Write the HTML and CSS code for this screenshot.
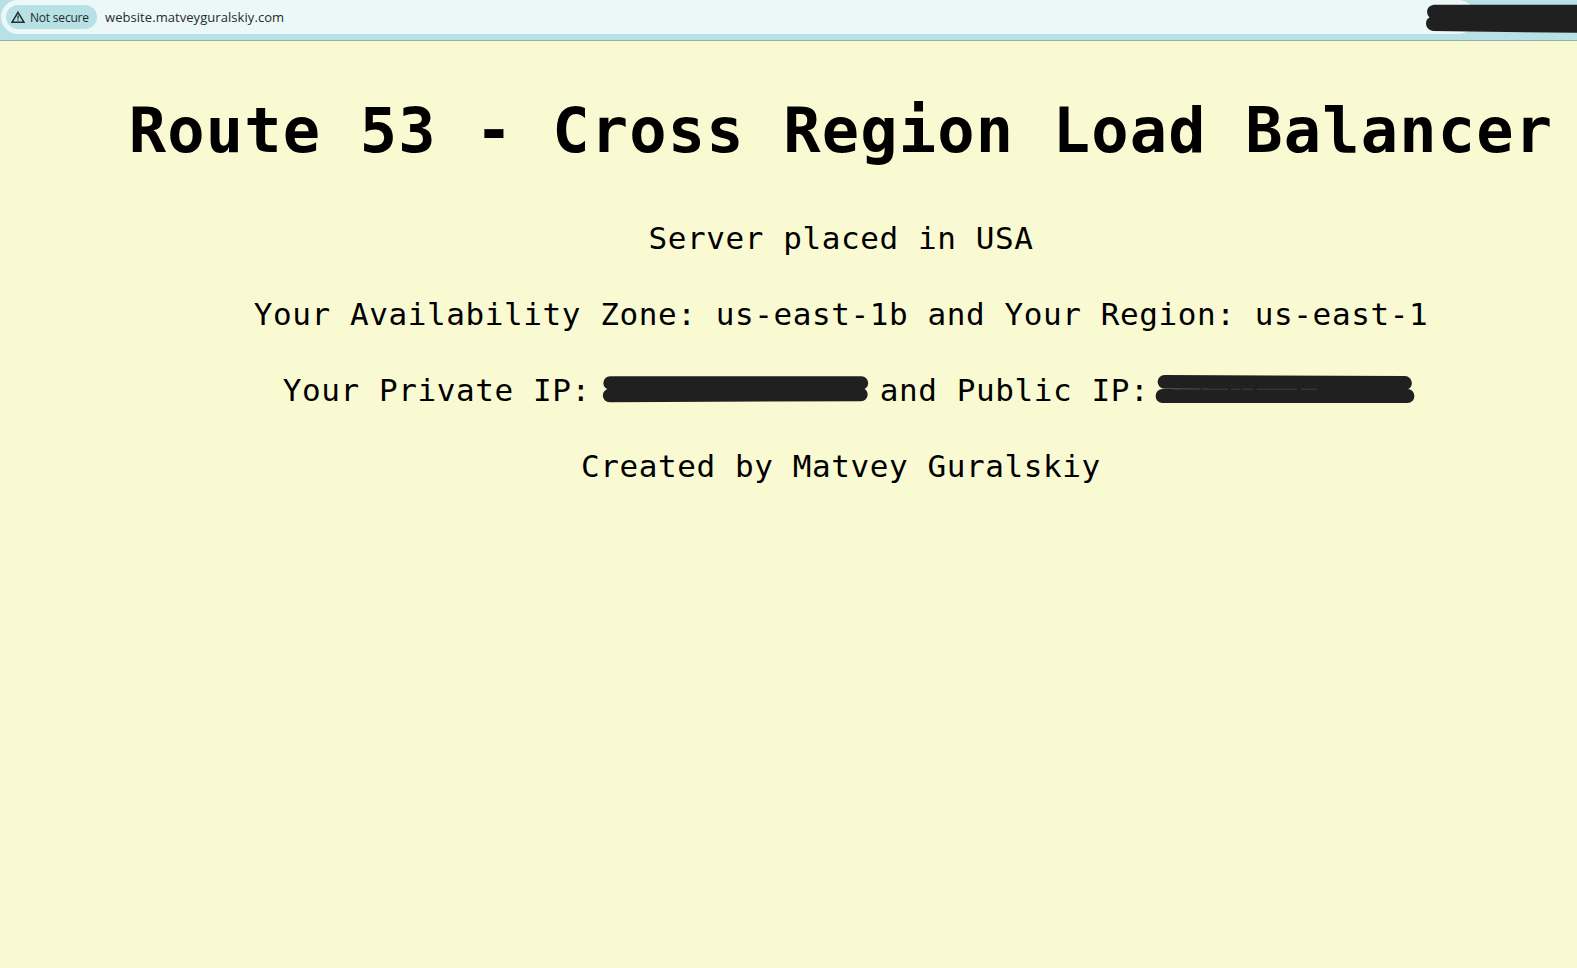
FILE: index.html
```html
<!DOCTYPE html>
<html lang="en">
<head>
<meta charset="utf-8">
<title>website.matveyguralskiy.com</title>
<link rel="stylesheet" href="styles.css">
</head>
<body>
<header class="toolbar">
  <div class="address">
    <div class="chip">
      <svg class="warning" width="14" height="12" viewBox="0 0 14 12"><path d="M7 1.3 13 11.3H1Z" fill="none" stroke="#1f2f31" stroke-width="1.5"/><path d="M7 4.6v3.1M7 8.5v1.3" stroke="#1f2f31" stroke-width="1.3"/></svg>
      <span>Not secure</span>
    </div>
    <span class="url">website.matveyguralskiy.com</span>
  </div>
  <svg class="mask" width="151" height="34" viewBox="0 0 151 34"><path d="M7.500 4.700H151V32.800L7 31Q0 29.500 0 23.500Q0 19 3.500 17.500Q1 15 1 11.500Q1.500 6 7.500 4.700Z" fill="#202020"/></svg>
</header>
<main class="page">
  <h1 class="title">Route 53 - Cross Region Load Balancer</h1>
  <p class="line">Server placed in USA</p>
  <p class="line">Your Availability Zone: us-east-1b and Your Region: us-east-1</p>
  <p class="line">
    <span>Your Private IP:</span>
    <svg class="blot first" viewBox="0 0 289 41"><path d="M19 12.900H270.500M18.500 25.500 270 24.500" stroke="#202020" stroke-width="13.400" stroke-linecap="round"/></svg>
    <span>and Public IP:</span>
    <svg class="blot second" viewBox="0 0 250 41"><path d="M15.500 11.800 256 13M13.500 26H258.500" stroke="#202020" stroke-width="13.800" stroke-linecap="round"/><path d="M24 19.200h10M36 19.200h15M54 19.200h25M82 19.200h9M93 19.200h11M108 19.200h40M152 19.200h16" stroke="#55564b" stroke-width=".6"/></svg>
  </p>
  <p class="line">Created by Matvey Guralskiy</p>
</main>
</body>
</html>
```
FILE: styles.css
```css
body {
  margin: 0;
  min-height: 100vh;
  background: #fafad2;
  color: #000;
}
.toolbar {
  position: relative;
  box-sizing: border-box;
  height: 41px;
  background: #b7e1e5;
  border-bottom: 1px solid #8fb0b3;
}
.address {
  display: flex;
  align-items: center;
  box-sizing: border-box;
  width: 1474px;
  height: 34px;
  margin-left: 1px;
  padding-left: 5px;
  border-radius: 17px;
  background: #ecf8f8;
  font-family: "Open Sans", "Noto Sans", sans-serif;
}
.chip {
  display: flex;
  align-items: center;
  gap: 5px;
  box-sizing: border-box;
  width: 91px;
  height: 24px;
  padding-left: 5px;
  border-radius: 12px;
  background: #b7e1e5;
  color: #1b2b2d;
  font-size: 12px;
  font-weight: 500;
  letter-spacing: -0.2px;
  white-space: nowrap;
}
.warning { flex: none; }
.url {
  margin-left: 8px;
  color: #252a2b;
  font-size: 13px;
  letter-spacing: 0.06px;
}
.mask {
  position: absolute;
  top: 0;
  right: 0;
}
.page {
  padding: 49px 0 0 105px;
  font-family: "DejaVu Sans Mono", monospace;
  white-space: nowrap;
}
.title {
  margin: 0 0 46px;
  font-size: 62px;
  line-height: 82px;
  letter-spacing: 1.175px;
  text-align: center;
}
.line {
  display: flex;
  justify-content: center;
  margin: 0 0 35px;
  font-size: 31px;
  line-height: 41px;
  letter-spacing: 0.587px;
}
.blot {
  flex: none;
  height: 41px;
  fill: none;
  overflow: visible;
}
.first { width: 289px; }
.second { width: 250px; }
```
